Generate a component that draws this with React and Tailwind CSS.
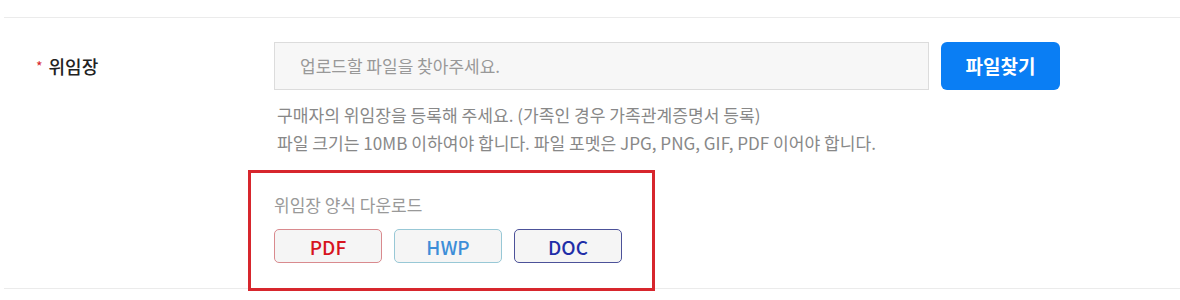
export default function App() {
  const font = { fontFamily: '"Noto Sans CJK KR", "Noto Sans", sans-serif' };
  return (
    <div className="w-[1180px] h-[300px] bg-white overflow-hidden" style={font}>
      <div className="ml-[4px] mt-[17px] border-t border-b border-[#ebebeb] h-[272px]">
        <div className="flex pt-[24px]">
          <div className="w-[270px] shrink-0 flex items-center h-[48px] pl-[32px]">
            <span className="text-[14px] text-[#d7262d] mr-[6px] leading-none">*</span>
            <span className="text-[18px] font-medium text-[#222]">위임장</span>
          </div>
          <div className="flex flex-col">
            <div className="flex gap-[12px]">
              <div className="w-[655px] h-[48px] bg-[#f7f7f7] border border-[#dcdcdc] flex items-center pl-[25px] text-[17px] text-[#999]">
                업로드할 파일을 찾아주세요.
              </div>
              <button className="w-[119px] h-[48px] rounded-[6px] bg-[#0a7ef4] text-white text-[19px] font-bold">
                파일찾기
              </button>
            </div>
            <div className="mt-[11px] pl-[3px] text-[17.1px] leading-[28px] text-[#888]">
              <p>구매자의 위임장을 등록해 주세요. (가족인 경우 가족관계증명서 등록)</p>
              <p>파일 크기는 10MB 이하여야 합니다. 파일 포멧은 JPG, PNG, GIF, PDF 이어야 합니다.</p>
            </div>
            <div className="relative z-10 mt-[13px] -ml-[26px] w-[407px] h-[121px] border-[3px] border-[#d7262d] pl-[23px] pt-[21px]">
              <p className="text-[17px] leading-[22px] text-[#999]">위임장 양식 다운로드</p>
              <div className="flex gap-[12px] mt-[13px]">
                <button className="w-[108px] h-[34px] rounded-[5px] bg-[#f5f5f5] border border-[#d98a8e] text-[#d7141e] text-[19px] font-medium leading-none">PDF</button>
                <button className="w-[108px] h-[34px] rounded-[5px] bg-[#f5f5f5] border border-[#98c8d6] text-[#3d8ed8] text-[19px] font-medium leading-none">HWP</button>
                <button className="w-[108px] h-[34px] rounded-[5px] bg-[#f5f5f5] border border-[#4c5299] text-[#1f2ea8] text-[19px] font-medium leading-none">DOC</button>
              </div>
            </div>
          </div>
        </div>
      </div>
    </div>
  );
}
